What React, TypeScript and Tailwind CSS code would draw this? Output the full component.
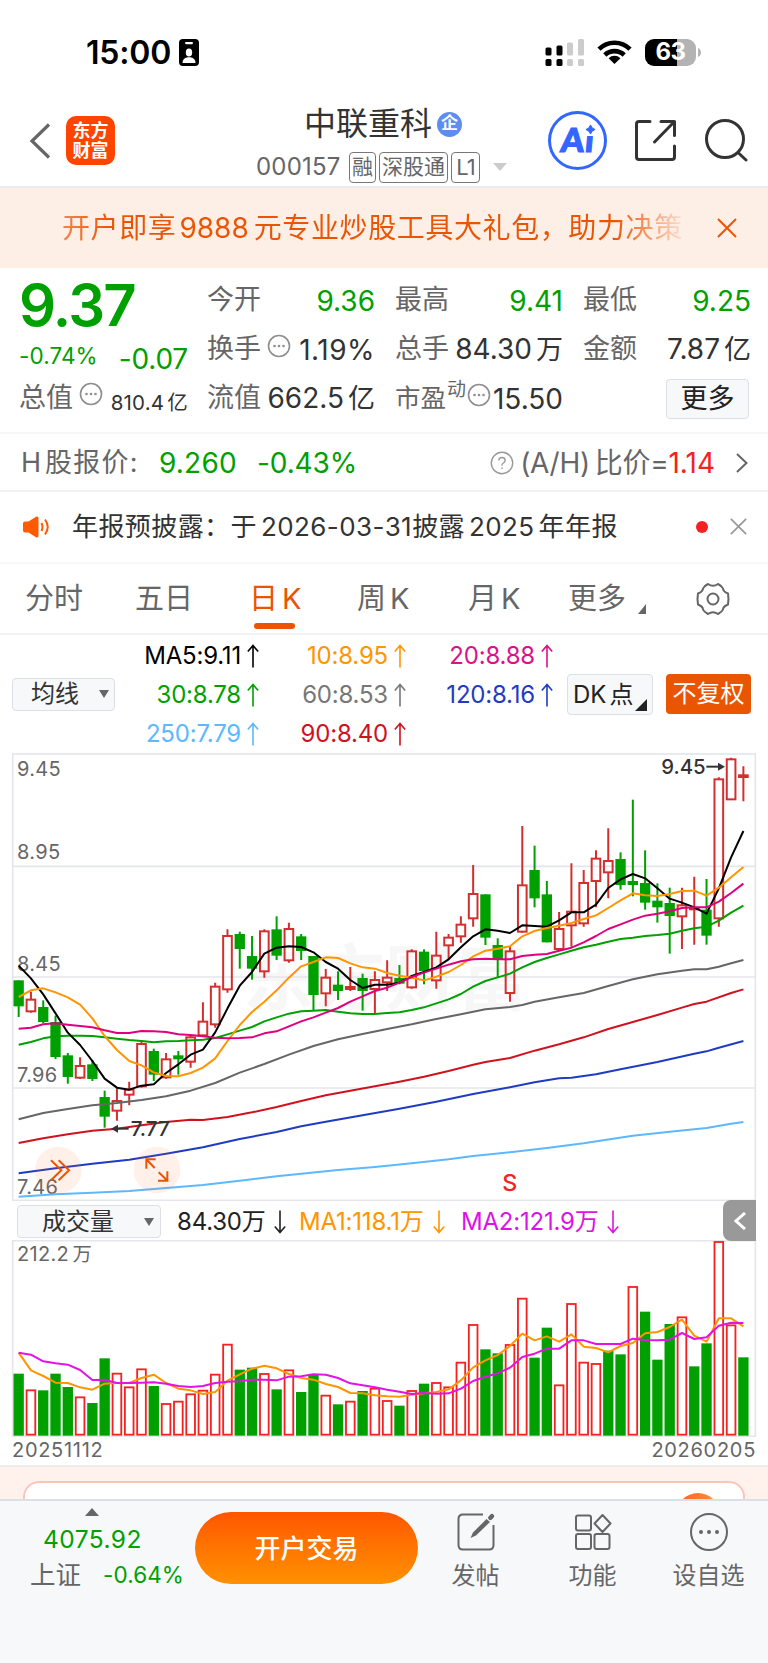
import React from "react";

/* ---------- Chart data (chart canvas units, 3 per css pixel) ---------- */
const STEP = 36.85;
const X0 = 56;
const cx = (i: number) => X0 + STEP * i;

// [direction, body top, body bottom, high, low]
type Candle = ["u" | "d", number, number, number, number];
const candles: Candle[] = [
  ["d", 706, 784, 706, 816], ["u", 764, 799, 740, 803], ["d", 786, 831, 766, 835], ["d", 831, 936, 812, 942],
  ["d", 931, 996, 924, 1016], ["u", 963, 998, 937, 1002], ["d", 958, 1002, 945, 1008], ["d", 1056, 1115, 1037, 1148],
  ["u", 1068, 1097, 1030, 1127], ["u", 1034, 1049, 1010, 1081], ["u", 897, 1024, 888, 1028], ["d", 918, 989, 911, 1008],
  ["u", 943, 997, 924, 1001], ["d", 931, 943, 918, 989], ["u", 877, 950, 870, 968], ["u", 830, 871, 772, 875],
  ["u", 725, 838, 713, 848], ["u", 573, 733, 553, 743], ["d", 567, 612, 560, 671], ["d", 633, 671, 573, 704],
  ["u", 559, 679, 553, 698], ["d", 553, 632, 514, 645], ["u", 552, 646, 533, 653], ["d", 574, 618, 567, 645],
  ["d", 633, 750, 633, 796], ["u", 698, 745, 672, 784], ["d", 719, 738, 679, 765], ["u", 726, 732, 666, 738],
  ["d", 699, 738, 686, 797], ["u", 705, 732, 679, 804], ["u", 698, 712, 646, 738], ["d", 699, 716, 660, 718],
  ["u", 619, 727, 613, 731], ["d", 620, 678, 613, 718], ["u", 632, 706, 560, 731], ["u", 578, 601, 567, 645],
  ["u", 539, 574, 514, 593], ["u", 447, 520, 360, 545], ["d", 448, 578, 448, 600], ["d", 600, 645, 580, 697],
  ["u", 619, 744, 605, 770], ["u", 421, 560, 243, 563], ["d", 375, 460, 302, 487], ["d", 448, 592, 408, 592],
  ["u", 552, 612, 501, 615], ["u", 500, 541, 355, 605], ["u", 414, 535, 375, 545], ["u", 341, 408, 316, 487],
  ["u", 348, 382, 250, 460], ["d", 342, 420, 322, 434], ["d", 408, 420, 164, 454], ["d", 414, 473, 316, 494],
  ["d", 467, 487, 415, 533], ["d", 474, 513, 428, 626], ["u", 481, 514, 428, 612], ["u", 489, 493, 395, 599],
  ["d", 494, 572, 402, 599], ["u", 103, 520, 97, 545], ["u", 43, 163, 38, 165], ["u", 91, 96, 64, 169],
];

const ma5 = [662, 700, 748, 805, 863, 900, 948, 1001, 1028, 1034, 1022, 1018, 984, 958, 929, 914, 862, 790, 722, 681, 626, 608, 604, 606, 622, 651, 671, 705, 729, 719, 719, 713, 693, 681, 667, 643, 607, 574, 553, 557, 564, 541, 543, 545, 526, 502, 502, 479, 429, 403, 387, 400, 430, 461, 473, 487, 506, 430, 337, 258];
const ma10 = [756, 736, 730, 742, 757, 779, 820, 873, 915, 948, 961, 982, 993, 994, 984, 968, 940, 888, 840, 801, 770, 736, 698, 664, 651, 637, 639, 655, 667, 671, 684, 692, 698, 706, 695, 681, 660, 634, 617, 611, 604, 574, 558, 549, 542, 534, 522, 511, 489, 466, 445, 451, 453, 447, 438, 437, 452, 428, 397, 366];
const ma20 = [851, 848, 838, 835, 839, 843, 847, 856, 864, 864, 858, 859, 861, 868, 870, 874, 878, 880, 879, 877, 865, 859, 844, 829, 817, 803, 789, 770, 754, 738, 728, 713, 696, 683, 671, 659, 649, 643, 641, 643, 643, 633, 629, 627, 617, 608, 592, 573, 552, 538, 524, 512, 506, 499, 489, 487, 487, 470, 444, 416];
const ma30 = [899, 891, 880, 874, 872, 872, 873, 877, 881, 885, 888, 892, 889, 888, 886, 884, 879, 868, 857, 846, 829, 817, 806, 799, 797, 795, 800, 805, 807, 807, 804, 802, 795, 787, 775, 763, 747, 725, 708, 697, 686, 667, 651, 639, 628, 617, 607, 599, 590, 582, 578, 573, 570, 566, 557, 550, 545, 527, 503, 482];

// long averages are nearly straight, so only the turning points are kept: [index, y]
type Pt = [number, number];
const ma60: Pt[] = [[0, 1123], [2, 1104], [4, 1092], [6, 1081], [8, 1074], [10, 1065], [12, 1054], [14, 1037], [16, 1014], [18, 983], [20, 957], [22, 929], [24, 903], [26, 883], [28, 867], [30, 852], [32, 838], [34, 822], [36, 808], [38, 793], [40, 786], [41, 780], [42, 770], [44, 757], [46, 744], [48, 723], [50, 703], [52, 688], [54, 677], [55, 673], [56, 673], [57, 665], [58, 655], [59, 645]];
const ma90: Pt[] = [[0, 1194], [2, 1180], [4, 1168], [6, 1157], [8, 1151], [10, 1141], [12, 1131], [14, 1124], [15, 1125], [17, 1116], [19, 1102], [21, 1086], [23, 1068], [25, 1051], [27, 1037], [29, 1024], [31, 1010], [33, 995], [35, 978], [37, 959], [38, 951], [40, 939], [42, 917], [44, 898], [46, 877], [48, 852], [50, 831], [52, 810], [54, 788], [55, 777], [56, 770], [58, 744], [59, 733]];
const ma120: Pt[] = [[0, 1285], [3, 1270], [6, 1256], [9, 1244], [12, 1226], [15, 1207], [18, 1182], [21, 1161], [23, 1144], [25, 1130], [28, 1111], [31, 1091], [34, 1070], [37, 1047], [40, 1027], [42, 1012], [44, 1000], [45, 998], [47, 988], [49, 973], [52, 951], [55, 926], [56, 919], [57, 908], [59, 888]];
const ma250: Pt[] = [[0, 1355], [3, 1348], [6, 1343], [9, 1338], [12, 1329], [15, 1320], [18, 1307], [21, 1294], [23, 1286], [26, 1275], [29, 1266], [32, 1255], [35, 1243], [37, 1233], [40, 1222], [43, 1209], [46, 1195], [50, 1172], [53, 1160], [56, 1149], [58, 1136], [59, 1131]];

// [direction, bar top]
const volumes: ["u" | "d", number][] = [
  ["d", 536], ["u", 585], ["d", 586], ["d", 536], ["d", 576], ["u", 606], ["d", 624], ["d", 490], ["u", 535], ["u", 576],
  ["u", 522], ["d", 573], ["u", 626], ["u", 619], ["u", 597], ["u", 586], ["u", 538], ["u", 448], ["d", 524], ["d", 518],
  ["u", 536], ["d", 583], ["u", 525], ["d", 591], ["d", 540], ["u", 601], ["d", 628], ["u", 619], ["d", 588], ["u", 580],
  ["u", 617], ["d", 632], ["u", 587], ["d", 566], ["u", 563], ["u", 576], ["u", 502], ["u", 389], ["d", 463], ["d", 475],
  ["u", 449], ["u", 310], ["d", 488], ["d", 398], ["u", 570], ["u", 326], ["u", 502], ["u", 506], ["d", 467], ["d", 478],
  ["u", 275], ["d", 350], ["d", 494], ["d", 387], ["u", 366], ["d", 514], ["d", 445], ["u", 140], ["u", 390], ["d", 487],
];
const volMa1 = [473, 526, 543, 563, 564, 577, 584, 566, 564, 564, 549, 539, 564, 581, 586, 597, 591, 557, 538, 521, 512, 520, 537, 549, 554, 567, 576, 594, 595, 601, 604, 605, 599, 595, 591, 583, 556, 517, 496, 480, 453, 416, 436, 424, 440, 418, 455, 459, 472, 453, 444, 415, 411, 396, 374, 422, 440, 370, 370, 394];
const volMa2 = [473, 479, 499, 505, 509, 525, 555, 554, 564, 564, 563, 562, 566, 573, 576, 573, 564, 560, 559, 554, 554, 556, 545, 544, 538, 539, 549, 565, 571, 577, 584, 590, 597, 594, 596, 595, 581, 558, 545, 535, 518, 486, 476, 461, 461, 436, 436, 447, 447, 447, 431, 435, 436, 434, 414, 432, 427, 392, 383, 384];

const line = (ys: number[]) => ys.map((y, i) => `${cx(i).toFixed(1)},${y}`).join(" ");
const sparse = (pts: Pt[]) => pts.map(([i, y]) => `${cx(i).toFixed(1)},${y}`).join(" ");

/* ---------- Small pieces ---------- */
function Arrow({ down = false }: { down?: boolean }) {
  return (
    <svg className={`h-6 w-3 shrink-0 ${down ? "rotate-180" : ""}`} viewBox="0 0 12 24" fill="none" stroke="currentColor" strokeWidth="1.600">
      <path d="M6 23.500V1.500M0.800 7.500L6 1.500L11.200 7.500" />
    </svg>
  );
}

function Dots() {
  return (
    <svg className="size-6 shrink-0" viewBox="0 0 24 24" fill="none" stroke="#8e8e8e" strokeWidth="1.600">
      <circle cx="12" cy="12" r="10.500" />
      <g fill="#8e8e8e" stroke="none">
        <circle cx="7.500" cy="12" r="1.300" />
        <circle cx="12" cy="12" r="1.300" />
        <circle cx="16.500" cy="12" r="1.300" />
      </g>
    </svg>
  );
}

function Close({ className }: { className: string }) {
  return (
    <svg className={className} viewBox="0 0 20 20" fill="none" stroke="currentColor" strokeWidth="2">
      <path d="M1 1L19 19M19 1L1 19" />
    </svg>
  );
}

function StatusBar() {
  return (
    <div className="flex h-[92px] items-start justify-between pt-[34px] pr-[67px] pl-[86px]">
      <div className="flex h-9 items-center">
        <span className="w-[93px] pt-[2px] text-[32px] font-semibold tracking-[-0.200px] text-black">15:00</span>
        <svg className="h-[27px] w-5" viewBox="0 0 20 27">
          <rect width="20" height="27" rx="4" fill="#000" />
          <rect x="6" y="3" width="8" height="2.200" rx="1.100" fill="#fff" />
          <ellipse cx="10" cy="13.500" rx="3.200" ry="4" fill="#fff" />
          <path d="M3.500 24C3.500 19.500 7 18.300 10 18.300S16.500 19.500 16.500 24Z" fill="#fff" />
        </svg>
      </div>
      <div className="flex h-9 items-center">
        <svg className="mr-3 h-[27px] w-10" viewBox="0 0 40 27">
          <g fill="#000">
            <rect x="0.500" y="8.500" width="6" height="8" rx="1.500" />
            <rect x="11.500" y="6.500" width="6" height="10" rx="1.500" />
            <rect x="0.500" y="20" width="6" height="7" rx="1.500" />
            <rect x="11.500" y="20" width="6" height="7" rx="1.500" />
          </g>
          <g fill="#ccc">
            <rect x="22" y="3.500" width="6" height="13" rx="1.500" />
            <rect x="33" y="0" width="6" height="16.500" rx="1.500" />
            <rect x="22" y="20" width="6" height="7" rx="1.500" />
            <rect x="33" y="20" width="6" height="7" rx="1.500" />
          </g>
        </svg>
        <svg className="mr-[13px] h-[26px] w-[35px]" viewBox="0 0 35 26" fill="none" stroke="#000" strokeWidth="4.600">
          <path d="M2 10.200A22 22 0 0 1 33 10.200" />
          <path d="M7.800 16A14 14 0 0 1 27.200 16" />
          <path d="M17.500 25L11.600 19.200A8.600 8.600 0 0 1 23.400 19.200Z" fill="#000" stroke="none" />
        </svg>
        <div className="flex h-[27px] w-[51px] items-center justify-center rounded-[9px] bg-linear-to-r from-black from-63% to-[#b3b3b3] to-63% text-[24px] font-bold tracking-tight text-white">
          63
        </div>
        <svg className="ml-0.5 h-[9px] w-[3px]" viewBox="0 0 3 9">
          <path d="M0 0Q3 1.500 3 4.500T0 9Z" fill="#b3b3b3" />
        </svg>
      </div>
    </div>
  );
}

function Header() {
  return (
    <header className="flex h-[96px] border-b-2 border-[#ebecee] pl-[29px]">
      <svg className="mt-[31px] h-[36px] w-[22px]" viewBox="0 0 22 36" fill="none" stroke="#666" strokeWidth="3.200">
        <path d="M20 1.500L3 18L20 34.500" />
      </svg>
      <div className="mt-[24px] ml-[15px] flex size-[49px] flex-col items-center justify-center rounded-[10px] bg-[#ff4400] font-['Liberation_Serif','Noto_Sans_CJK_SC',serif] text-[18px] leading-[20px] font-bold text-white">
        <span>东方</span>
        <span>财富</span>
      </div>
      <div className="ml-[141px] w-[291px]">
        <div className="mt-[10px] flex h-[44px] items-center pl-[48px]">
          <span className="text-[32px] text-[#333]">中联重科</span>
          <span className="ml-[5px] flex size-[25px] items-center justify-center rounded-full bg-[#5d8df0] text-[17px] font-bold text-white">企</span>
        </div>
        <div className="mt-[4px] flex h-[34px] items-center text-[22px] text-[#666]">
          <span className="w-[93px] text-[24px] tracking-[0.200px]">000157</span>
          <span className="flex h-[31px] w-[27px] items-center justify-center rounded border-[1.500px] border-[#777] text-[21px]">融</span>
          <span className="ml-[3px] flex h-[31px] w-[69px] items-center justify-center rounded border-[1.500px] border-[#777] text-[21px]">深股通</span>
          <span className="ml-[3px] flex h-[31px] w-[29px] items-center justify-center rounded border-[1.500px] border-[#777] tracking-[-1px]">L1</span>
          <svg className="ml-[13px] h-2 w-[14px]" viewBox="0 0 14 8">
            <path d="M0 0H14L7 8Z" fill="#ccc" />
          </svg>
        </div>
      </div>
      <div className="relative mt-[19px] ml-[1px] flex size-[59px] items-center justify-center rounded-full border-[3px] border-[#3366ff] text-[#3366ff]">
        <span className="skew-x-[-5deg] pb-[3px] font-['Lato',sans-serif] text-[33px] leading-none font-black tracking-[1px] [-webkit-text-stroke:1.200px_#3366ff]">Ai</span>
        <span className="absolute top-[9px] left-[33px] flex h-[13px] w-[12px] items-center justify-center bg-white">
          <svg className="size-[11px]" viewBox="0 0 12 12">
            <path d="M6 1Q7.200 4.800 11 6Q7.200 7.200 6 11Q4.800 7.200 1 6Q4.800 4.800 6 1Z" fill="#3366ff" stroke="#3366ff" />
          </svg>
        </span>
      </div>
      <svg className="mt-[27px] ml-[27px] size-[43px]" viewBox="0 0 43 43" fill="none" stroke="#333" strokeWidth="3" strokeLinecap="round" strokeLinejoin="round">
        <path d="M16 2.500H5Q2.500 2.500 2.500 5V38Q2.500 40.500 5 40.500H38Q40.500 40.500 40.500 38V27" />
        <path d="M27 2.500H40.500V16.500M39.500 3.500L20.500 23" />
      </svg>
      <svg className="mt-[26px] ml-[27px] size-[44px]" viewBox="0 0 44 44" fill="none" stroke="#333" strokeWidth="3" strokeLinecap="round">
        <circle cx="21" cy="21" r="18.500" />
        <path d="M34.500 35L42 42" />
      </svg>
    </header>
  );
}

function Banner() {
  return (
    <div className="flex h-[80px] items-center bg-[#fdeee6] pr-[31px] pb-px pl-[62px] text-[#ea5504]">
      <div className="w-[628px] bg-clip-text text-[28px] tracking-[0.600px] whitespace-nowrap text-transparent [background-image:linear-gradient(90deg,#f3844a_0,#ea5504_8%,#ea5504_88%,#fdeee6_100%)]">
        开户即享<span className="mr-[5px] ml-[3px] tracking-[0px]">9888</span>元专业炒股工具大礼包，助力决策
      </div>
      <Close className="ml-auto size-[20px]" />
    </div>
  );
}

function Pair({ label, value, color = "text-[#333]" }: { label: React.ReactNode; value: React.ReactNode; color?: string }) {
  return (
    <div className="flex h-[49px] w-[168px] items-center justify-between whitespace-nowrap">
      <span className="flex items-center text-[27px] text-[#666]">{label}</span>
      <span className={`text-[28px] ${color}`}>{value}</span>
    </div>
  );
}

function Quote() {
  return (
    <section className="flex h-[166px] border-b-2 border-[#f5f6f8] pt-[8px] pl-[19px]">
      <div className="w-[169px] text-[#00a000]">
        <div className="flex h-[58px] items-center text-[58px] font-semibold tracking-[-1.700px]">9.37</div>
        <div className="flex h-[43px] items-center justify-between">
          <span className="text-[22.500px] tracking-[0.100px]">-0.74%</span>
          <span className="pt-[6px] text-[28px] tracking-[-0.200px]">-0.07</span>
        </div>
        <div className="flex h-[42px] items-center text-[#666]">
          <span className="text-[27px]">总值</span>
          <span className="mb-2 ml-[6px]"><Dots /></span>
          <span className="ml-auto pt-[10px] text-[20.500px] tracking-[0.200px] text-[#333]">810.4<span className="ml-[3px]">亿</span></span>
        </div>
      </div>
      <div className="ml-[19px] grid h-[147px] grid-cols-3 gap-x-[20px]">
        <Pair label="今开" value="9.36" color="text-[#00a000]" />
        <Pair label="最高" value="9.41" color="text-[#00a000]" />
        <Pair label="最低" value="9.25" color="text-[#00a000]" />
        <Pair label={<>换手<span className="mb-2 ml-[6px]"><Dots /></span></>} value={<span className="tracking-[0.500px]">1.19%</span>} />
        <Pair label="总手" value={<>84.30<span className="ml-[4px] text-[27px]">万</span></>} />
        <Pair label="金额" value={<>7.87<span className="ml-[4px] text-[27px]">亿</span></>} />
        <Pair label="流值" value={<>662.5<span className="ml-[4px] text-[27px]">亿</span></>} />
        <Pair label={<><span className="text-[25.500px]">市盈</span><span className="mb-4 ml-px text-[19px]">动</span><span className="mb-2 ml-px"><Dots /></span></>} value="15.50" />
        <div className="flex h-[49px] items-center justify-end pr-[2px]">
          <button className="h-[40px] w-[83px] rounded border-[1.500px] border-[#dcdfe3] bg-[#f7f8fa] text-[27px] leading-none text-[#222]">更多</button>
        </div>
      </div>
    </section>
  );
}

function HShare() {
  return (
    <div className="flex h-[58px] items-center border-b-2 border-[#f0f1f3] pt-[2px] pr-[20px] pl-[21px] text-[28px] whitespace-nowrap text-[#666]">
      <span className="w-[138px] text-[27px]">H<span className="ml-1 tracking-[1.200px]">股报价:</span></span>
      <span className="w-[98px] tracking-[0.200px] text-[#00a000]">9.260</span>
      <span className="tracking-[-0.100px] text-[#00a000]">-0.43%</span>
      <svg className="ml-auto size-6" viewBox="0 0 24 24" fill="none" stroke="#999" strokeWidth="1.400">
        <circle cx="12" cy="12" r="10.700" />
        <path d="M8.800 9.500Q9 6.500 12 6.500T15.200 9.300Q15.200 11 13.400 12T12 14.700M12 16.500V18" />
      </svg>
      <span className="ml-[6px] tracking-[-0.300px]">(A/H)</span>
      <span className="ml-[5px] tracking-[-0.300px]">比价=</span>
      <span className="text-[#f52222]">1.14</span>
      <svg className="ml-[21px] h-5 w-3" viewBox="0 0 12 20" fill="none" stroke="#666" strokeWidth="2">
        <path d="M1 1L10.500 10L1 19" />
      </svg>
    </div>
  );
}

function Notice() {
  return (
    <div className="flex h-[72px] items-center border-b-2 border-[#f7f8f9] pr-[21px] pb-px pl-[23px]">
      <svg className="h-[22px] w-[27px]" viewBox="0 0 27 22">
        <path d="M2 5.500H5.500L13 0.800Q15.500-0.300 15.500 2.500V19.500Q15.500 22.300 13 21.200L5.500 16.500H2Q0 16.500 0 14.500V7.500Q0 5.500 2 5.500Z" fill="#ff5a00" />
        <path d="M18.500 7Q20.500 11 18.500 15M22 3.500Q27.500 11 22 18.500" fill="none" stroke="#ff5a00" strokeWidth="2" />
      </svg>
      <span className="ml-[22px] text-[26px] tracking-[0.420px] whitespace-nowrap text-[#333]">
        年报预披露：于<span className="ml-[4px]">2026-03-31</span>披露<span className="mx-[4px]">2025</span>年年报
      </span>
      <span className="ml-auto size-3 rounded-full bg-[#f52222]" />
      <Close className="ml-[22px] size-[17px] text-[#999]" />
    </div>
  );
}

function PeriodTabs() {
  return (
    <nav className="flex h-[71px] items-center border-b-2 border-[#f2f3f5] pl-[25px] text-[29px] whitespace-nowrap text-[#666]">
      <span className="w-[110px]">分时</span>
      <span className="w-[114px]">五日</span>
      <span className="relative w-[108px] text-[#ea5504]">
        日<span className="ml-1">K</span>
        <i className="absolute -bottom-[9px] left-[5px] h-[6px] w-[41px] rounded-full bg-[#ea5504]" />
      </span>
      <span className="w-[111px]">周<span className="ml-1">K</span></span>
      <span className="w-[100px]">月<span className="ml-1">K</span></span>
      <span className="flex w-[127px] items-center">
        更多
        <svg className="mt-5 ml-3 h-[10px] w-2" viewBox="0 0 8 10"><path d="M8 0V10H0Z" fill="#666" /></svg>
      </span>
      <svg className="h-[34px] w-[36px]" viewBox="0 0 36 34" fill="none" stroke="#666" strokeWidth="2" strokeLinejoin="round">
        <path d="M13 2Q18 5.500 23 2Q27 4 28 6.500Q28 9.500 33 11.500Q34 17 33 22.500Q28 24.500 28 27.500Q27 30 23 32Q18 28.500 13 32Q9 30 8 27.500Q8 24.500 3 22.500Q2 17 3 11.500Q8 9.500 8 6.500Q9 4 13 2Z" />
        <circle cx="18" cy="17" r="5.500" />
      </svg>
    </nav>
  );
}

const legend = [
  { text: "MA5:9.11", color: "text-black" },
  { text: "10:8.95", color: "text-[#ff9500]" },
  { text: "20:8.88", color: "text-[#d9128a]" },
  { text: "30:8.78", color: "text-[#00a000]" },
  { text: "60:8.53", color: "text-[#777]" },
  { text: "120:8.16", color: "text-[#1f3bc4]" },
  { text: "250:7.79", color: "text-[#5cb8ff]" },
  { text: "90:8.40", color: "text-[#d0121f]" },
];

function MaLegend() {
  return (
    <section className="flex h-[118px] items-center pl-[12px]">
      <button className="flex h-[33px] w-[103px] items-center justify-between rounded border-[1.500px] border-[#dcdfe3] bg-[#f7f8fa] pr-[5px] pl-[18px] text-[24px] text-[#333]">
        均线
        <svg className="h-2 w-[10px]" viewBox="0 0 10 8"><path d="M0 0H10L5 8Z" fill="#666" /></svg>
      </button>
      <div className="mt-[2px] grid h-[116px] grid-cols-[144px_147px_147px] grid-rows-3">
        {legend.map((item) => (
          <span key={item.text} className={`flex items-center justify-end text-[24px] tracking-[-0.200px] ${item.color}`}>
            {item.text}
            <span className="ml-[6px] flex"><Arrow /></span>
          </span>
        ))}
      </div>
      <button className="ml-[14px] flex h-[41px] w-[86px] rounded border-[1.500px] border-[#dcdfe3] bg-[#f7f8fa] pl-[5px] text-[24px] leading-[39px] text-[#222]">
        DK<span className="ml-[3px]">点</span>
        <svg className="mt-[24px] ml-[2px] size-3 shrink-0" viewBox="0 0 12 12"><path d="M12 0V12H0Z" fill="#222" /></svg>
      </button>
      <button className="ml-[13px] h-[40px] w-[85px] rounded bg-[#ea5504] text-[24px] leading-none text-white">不复权</button>
    </section>
  );
}

function KLine() {
  const labels: [string, number][] = [["9.45", 94], ["8.95", 343], ["8.45", 678], ["7.96", 1012], ["7.46", 1346]];
  return (
    <svg className="block h-[448px] w-full" viewBox="0 24 2304 1344">
      <text x="728" y="776" fontSize="214" fontWeight="700" fill="#f7f7f7">东方财富</text>
      <g stroke="#e4e6ec" strokeWidth="5" fill="none">
        <rect x="38" y="27" width="2228" height="1339" />
        <path d="M38 364H2266M38 696H2266M38 1029H2266" />
      </g>
      <g fontSize="60" fill="#666" letterSpacing="1">
        {labels.map(([t, y]) => (
          <text key={t} x="51" y={y}>{t}</text>
        ))}
      </g>
      {candles.map(([dir, top, bottom, high, low], i) => {
        const x = cx(i);
        if (dir === "d") {
          return (
            <g key={i} fill="#00a000">
              <rect x={x - 3} y={high} width="6" height={low - high} />
              <rect x={x - 15.5} y={top} width="31" height={bottom - top} />
            </g>
          );
        }
        return (
          <g key={i} stroke="#d32f2f" strokeWidth="6" fill="none">
            <path d={`M${x} ${high}V${top}M${x} ${bottom}V${low}`} />
            <rect x={x - 13} y={top} width="26" height={bottom - top} />
          </g>
        );
      })}
      <g fill="none" strokeWidth="6" strokeLinejoin="round">
        <polyline points={sparse(ma250)} stroke="#5cb8ff" />
        <polyline points={sparse(ma120)} stroke="#1f3bc4" />
        <polyline points={sparse(ma90)} stroke="#d0121f" />
        <polyline points={sparse(ma60)} stroke="#666" />
        <polyline points={line(ma30)} stroke="#00a000" />
        <polyline points={line(ma5)} stroke="#000" />
        <polyline points={line(ma10)} stroke="#ff9500" />
        <polyline points={line(ma20)} stroke="#e0007f" />
      </g>
      <g fill="#333" fontSize="61" fontWeight="500">
        <text x="1984" y="87">9.45</text>
        <path d="M2119 65H2156" stroke="#333" strokeWidth="6" />
        <path d="M2154 53L2175 65L2154 77Z" />
        <text x="392" y="1172" fontSize="62">7.77</text>
        <path d="M350 1151H386" stroke="#333" strokeWidth="6" />
        <path d="M354 1139L333 1151L354 1163Z" />
      </g>
      <text x="1507" y="1339" fontSize="70" fontWeight="500" fill="#f52222">S</text>
      <g fill="#ff6a28" fillOpacity="0.1">
        <circle cx="175" cy="1275" r="70" />
        <circle cx="471" cy="1275" r="70" />
      </g>
      <g fill="none" stroke="#ea5504" strokeWidth="6">
        <path d="M153 1246L184 1276L153 1306M176 1246L207 1276L176 1306" />
        <path d="M439 1271V1243H467M441 1245L464 1269M502 1279V1307H474M500 1305L476 1282" />
      </g>
    </svg>
  );
}

function VolumeHeader() {
  return (
    <div className="relative flex h-[39px] items-center pt-[2px] pl-[17px] text-[24px] tracking-[-0.200px] whitespace-nowrap">
      <button className="flex h-[33px] w-[144px] items-center justify-between rounded border-[1.500px] border-[#dcdfe3] bg-[#f7f8fa] pr-[6px] pl-[24px] text-[24px] tracking-normal text-[#333]">
        成交量
        <svg className="h-2 w-[10px]" viewBox="0 0 10 8"><path d="M0 0H10L5 8Z" fill="#666" /></svg>
      </button>
      <span className="ml-[16px] flex w-[122px] items-center gap-[8px] text-[#222]">84.30万<Arrow down /></span>
      <span className="flex w-[162px] items-center gap-[9px] text-[#ff9500]">MA1:118.1万<Arrow down /></span>
      <span className="flex items-center gap-[8px] text-[#dd12e6]">MA2:121.9万<Arrow down /></span>
      <button className="absolute -top-px right-[12px] flex h-[41px] w-[33px] items-center justify-center rounded-l-lg bg-[#999]">
        <svg className="h-[18px] w-[12px]" viewBox="0 0 12 18" fill="none" stroke="#fff" strokeWidth="3">
          <path d="M11 1L2 9L11 17" />
        </svg>
      </button>
    </div>
  );
}

function Volume() {
  return (
    <svg className="block h-[197px] w-full" viewBox="0 135 2304 591">
      <rect x="38" y="137" width="2228" height="587" fill="none" stroke="#e4e6ec" strokeWidth="5" />
      <text x="51" y="197" fontSize="60" fill="#666" letterSpacing="1">212.2<tspan dx="10" fontSize="58">万</tspan></text>
      {volumes.map(([dir, top], i) =>
        dir === "d" ? (
          <rect key={i} x={cx(i) - 15.5} y={top} width="31" height={722 - top} fill="#00a000" />
        ) : (
          <rect key={i} x={cx(i) - 13} y={top + 1} width="26" height={718 - top} fill="#fff" stroke="#f52222" strokeWidth="5.500" />
        )
      )}
      <g fill="none" strokeWidth="6" strokeLinejoin="round">
        <polyline points={line(volMa1)} stroke="#ff9500" />
        <polyline points={line(volMa2)} stroke="#e312e6" />
      </g>
    </svg>
  );
}

function BottomBar() {
  return (
    <footer className="flex h-[164px] border-t-2 border-[#dcdfe3] bg-[#f7f8fa] text-[#666]">
      <div className="w-[195px] pt-[7px]">
        <svg className="ml-[85px] block h-2 w-[14px]" viewBox="0 0 14 8"><path d="M7 0L14 8H0Z" fill="#666" /></svg>
        <div className="mt-[6px] flex h-[35px] items-center pl-[43px] text-[24.500px] tracking-[0.450px] text-[#00a000]">4075.92</div>
        <div className="flex h-[36px] items-center pl-[30px] text-[25.500px]">
          <span className="w-[73px]">上证</span>
          <span className="text-[22.500px] tracking-[0.100px] text-[#00a000]">-0.64%</span>
        </div>
      </div>
      <button className="mt-[11px] h-[72px] w-[223px] rounded-full bg-linear-to-b from-[#ff5500] to-[#ff9000] text-[26px] font-medium text-white">开户交易</button>
      <div className="ml-[17px] flex w-[81px] flex-col items-center pt-[11px] text-[24px]">
        <svg className="h-[40px] w-[40px]" viewBox="0 0 40 40" fill="none" stroke="#666" strokeWidth="2">
          <path d="M27 2.500H7Q2.500 2.500 2.500 7V33Q2.500 37.500 7 37.500H33Q37.500 37.500 37.500 33V13" />
          <path d="M14.500 26L17 20.500L30.500 7L34 10L20 23.500Z" fill="#666" stroke="none" />
          <path d="M34.300 5.800L36 4.200" strokeWidth="4.500" strokeLinecap="round" />
        </svg>
        <span className="mt-[6px] leading-[36px]">发帖</span>
      </div>
      <div className="ml-[36px] flex w-[81px] flex-col items-center pt-[11px] text-[24px]">
        <svg className="h-[40px] w-[40px]" viewBox="0 0 40 40" fill="none" stroke="#666" strokeWidth="2">
          <rect x="3" y="3.500" width="15" height="15" rx="2" />
          <rect x="3" y="22" width="15" height="15" rx="2" />
          <rect x="21.500" y="22" width="15" height="15" rx="2" />
          <path d="M29.500 3L37.500 11.500L29.500 20L21.500 11.500Z" strokeLinejoin="round" />
        </svg>
        <span className="mt-[6px] leading-[36px]">功能</span>
      </div>
      <div className="ml-[35px] flex w-[81px] flex-col items-center pt-[11px] text-[24px]">
        <svg className="h-[40px] w-[40px]" viewBox="0 0 40 40" fill="none" stroke="#666" strokeWidth="2">
          <circle cx="20" cy="20" r="18" />
          <g fill="#666" stroke="none">
            <circle cx="12" cy="20" r="2" />
            <circle cx="20" cy="20" r="2" />
            <circle cx="28" cy="20" r="2" />
          </g>
        </svg>
        <span className="mt-[6px] leading-[36px]">设自选</span>
      </div>
    </footer>
  );
}

export default function App() {
  return (
    <div className="flex h-[1663px] w-[768px] flex-col overflow-hidden bg-white font-['Inter','Noto_Sans_CJK_SC',sans-serif] *:shrink-0">
      <StatusBar />
      <Header />
      <Banner />
      <Quote />
      <HShare />
      <Notice />
      <PeriodTabs />
      <MaLegend />
      <KLine />
      <VolumeHeader />
      <Volume />
      <div className="flex h-[28px] items-center justify-between pr-[12px] pb-[2px] pl-[12px] text-[20px] tracking-[0.700px] text-[#666]">
        <span>20251112</span>
        <span>20260205</span>
      </div>
      {/* promo card, cut off by the bottom bar */}
      <div className="h-[34px] overflow-hidden border-t-2 border-[#ebecee] bg-[#fff2ec] px-[23px] pt-[14px]">
        <div className="h-[60px] rounded-[16px] border-2 border-[#ffc4b8] bg-white pt-[10px] pl-[651px]">
          <div className="size-[44px] rounded-full bg-linear-to-r from-[#ff5f14] to-[#ff9040]" />
        </div>
      </div>
      <BottomBar />
    </div>
  );
}
